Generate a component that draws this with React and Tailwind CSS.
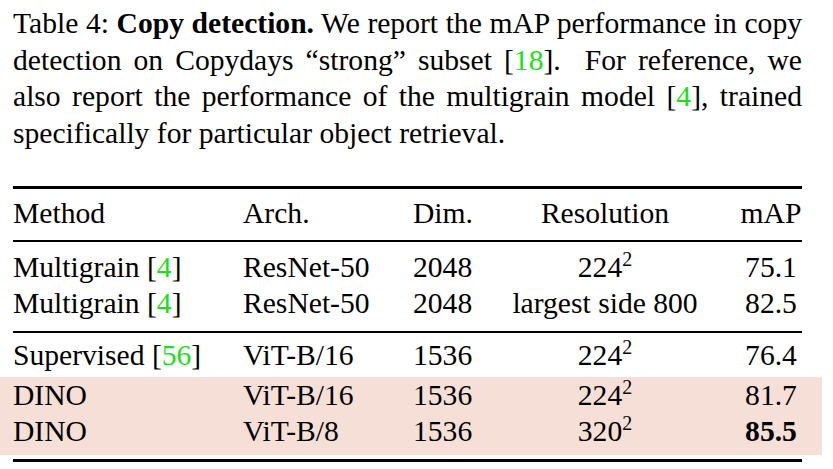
import React from "react";

const cite = "text-[#19e019]";

function Sq({ n }) {
  return (
    <span>
      {n}
      <sup className="text-[20px] top-[-11px]">2</sup>
    </span>
  );
}

const rowCls =
  "grid grid-cols-[230px_170px_80px_224px_85px] h-[36px] leading-[36px] whitespace-nowrap";

function Row({ cells, className = "" }) {
  return (
    <div className={`${rowCls} ${className}`}>
      <div>{cells[0]}</div>
      <div>{cells[1]}</div>
      <div>{cells[2]}</div>
      <div className="text-center">{cells[3]}</div>
      <div className="pl-[23px] text-center">{cells[4]}</div>
    </div>
  );
}

export default function App() {
  return (
    <div className="w-[833px] h-[469px] bg-white text-black overflow-hidden [font-family:'Liberation_Serif',serif] text-[29.6px]">
      {/* Caption */}
      <div className="pl-[13px] w-[802px] pt-[5px] leading-[36.5px]">
        <div className="text-justify [text-align-last:justify]">
          Table 4: <b>Copy detection.</b> We report the mAP performance in copy
        </div>
        <div className="text-justify [text-align-last:justify]">
          detection on Copydays “strong” subset [<span className={cite}>18</span>].&nbsp; For reference, we
        </div>
        <div className="text-justify [text-align-last:justify]">
          also report the performance of the multigrain model [<span className={cite}>4</span>], trained
        </div>
        <div>specifically for particular object retrieval.</div>
      </div>

      {/* Table */}
      <div className="ml-[13px] w-[789px] mt-[35px] flex flex-col">
        <div className="h-[3px] bg-black" />
        <Row className="mt-[6px]" cells={["Method", "Arch.", "Dim.", "Resolution", "mAP"]} />
        <div className="h-[2px] bg-black mt-[9px]" />
        <Row
          className="mt-[7px]"
          cells={[
            <>Multigrain [<span className={cite}>4</span>]</>,
            "ResNet-50",
            "2048",
            <Sq n="224" />,
            "75.1",
          ]}
        />
        <Row
          cells={[
            <>Multigrain [<span className={cite}>4</span>]</>,
            "ResNet-50",
            "2048",
            "largest side 800",
            "82.5",
          ]}
        />
        <div className="h-[2px] bg-black mt-[10px]" />
        <Row
          className="mt-[4px]"
          cells={[
            <>Supervised [<span className={cite}>56</span>]</>,
            "ViT-B/16",
            "1536",
            <Sq n="224" />,
            "76.4",
          ]}
        />
        <div className="mt-[4px] -ml-[13px] w-[822px] pl-[13px] pb-[6px] bg-[#f5dfd6]">
          <div className="w-[789px]">
            <Row
              className="h-[33px] leading-[30px]"
              cells={["DINO", "ViT-B/16", "1536", <Sq n="224" />, "81.7"]}
            />
            <Row
              cells={["DINO", "ViT-B/8", "1536", <Sq n="320" />, <b>85.5</b>]}
            />
          </div>
        </div>
        <div className="h-[3px] bg-black mt-[4px]" />
      </div>
    </div>
  );
}
